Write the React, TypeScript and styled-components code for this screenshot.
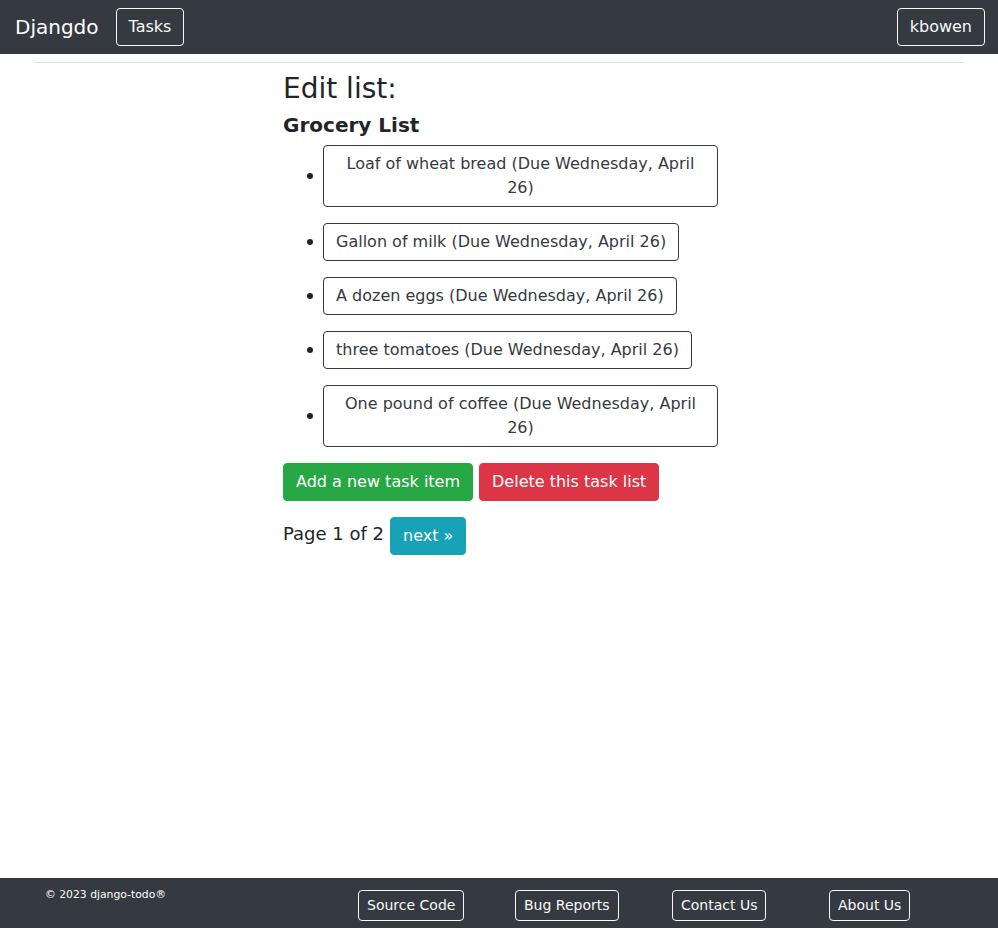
import React from 'react';
import styled, { createGlobalStyle, css } from 'styled-components';

const GlobalStyle = createGlobalStyle`
  * {
    box-sizing: border-box;
  }

  body {
    margin: 0;
    font-family: "DejaVu Sans", "Liberation Sans", sans-serif;
    font-size: 16px;
    line-height: 1.5;
    color: #212529;
    background: #fff;
  }
`;

const COLORS = {
  dark: '#343a40',
  light: '#f8f9fa',
  success: '#28a745',
  danger: '#dc3545',
  info: '#17a2b8',
};

type Variant = 'success' | 'danger' | 'info' | 'outlineDark' | 'outlineLight';

const buttonBase = css`
  display: inline-block;
  font-family: inherit;
  font-weight: 400;
  text-align: center;
  border: 1px solid transparent;
  border-radius: 4px;
  cursor: pointer;
`;

const Button = styled.button<{ $variant: Variant; $small?: boolean }>`
  ${buttonBase}
  padding: ${({ $small }) => ($small ? '4px 8px' : '6px 12px')};
  font-size: ${({ $small }) => ($small ? '14px' : '16px')};
  line-height: 1.5;

  ${({ $variant }) => {
    switch ($variant) {
      case 'outlineDark':
        return css`
          background: transparent;
          color: ${COLORS.dark};
          border-color: ${COLORS.dark};
        `;
      case 'outlineLight':
        return css`
          background: transparent;
          color: ${COLORS.light};
          border-color: ${COLORS.light};
        `;
      default:
        return css`
          background: ${COLORS[$variant]};
          color: #fff;
          border-color: ${COLORS[$variant]};
        `;
    }
  }}
`;

const Page = styled.div`
  display: flex;
  flex-direction: column;
  min-height: 100vh;
`;

const Navbar = styled.nav`
  display: flex;
  align-items: center;
  justify-content: space-between;
  height: 54px;
  padding: 0 13px 0 15px;
  background: ${COLORS.dark};
`;

const NavLeft = styled.div`
  display: flex;
  align-items: center;
`;

const Brand = styled.span`
  font-size: 20px;
  line-height: 30px;
  color: #fff;
  margin-right: 17px;
`;

const Main = styled.main`
  width: 100%;
  max-width: 960px;
  margin: 0 auto;
  padding: 0 15px;
`;

const Rule = styled.hr`
  margin: 8px 0 9px;
  border: 0;
  border-top: 1px solid #dedde9;
`;

const Column = styled.section`
  width: 435px;
  margin-left: 249px;
`;

const Title = styled.h3`
  margin: 0 0 7px;
  font-size: 28px;
  font-weight: 400;
  line-height: 1.2;
`;

const ListName = styled.h5`
  margin: 0 0 8px;
  font-size: 20px;
  font-weight: 700;
  line-height: 1.2;
`;

const Items = styled.ul`
  list-style: none;
  margin: 0 0 16px;
  padding: 0 0 0 40px;
  display: flex;
  flex-direction: column;
  gap: 16px;
`;

const Item = styled.li`
  position: relative;
  display: flex;
  align-items: center;

  &::before {
    content: '';
    position: absolute;
    left: -16px;
    top: 50%;
    width: 6px;
    height: 6px;
    margin-top: -3px;
    border-radius: 50%;
    background: #212529;
  }
`;

const Actions = styled.div`
  display: flex;
  gap: 6px;
  margin-bottom: 16px;
`;

const Pager = styled.div`
  display: flex;
  align-items: center;
  gap: 6px;
`;

const PagerText = styled.span`
  font-size: 18px;
  padding-bottom: 4px;
`;

const Footer = styled.footer`
  margin-top: auto;
  height: 50px;
  background: ${COLORS.dark};
  display: grid;
  grid-template-columns: 313px repeat(4, 157px);
  align-items: start;
  padding: 12px 0 0 45px;
`;

const Copyright = styled.span`
  font-size: 10.8px;
  line-height: 16px;
  color: #fff;
  margin-top: -3px;
`;

const FooterCell = styled.div`
  display: flex;
`;

const tasks = [
  'Loaf of wheat bread',
  'Gallon of milk',
  'A dozen eggs',
  'three tomatoes',
  'One pound of coffee',
];

const footerLinks = ['Source Code', 'Bug Reports', 'Contact Us', 'About Us'];

const App = (): JSX.Element => (
  <Page>
    <GlobalStyle />
    <Navbar>
      <NavLeft>
        <Brand>Djangdo</Brand>
        <Button $variant="outlineLight">Tasks</Button>
      </NavLeft>
      <Button $variant="outlineLight">kbowen</Button>
    </Navbar>

    <Main>
      <Rule />
      <Column>
        <Title>Edit list:</Title>
        <ListName>Grocery List</ListName>
        <Items>
          {tasks.map((task) => (
            <Item key={task}>
              <Button $variant="outlineDark">{task} (Due Wednesday, April 26)</Button>
            </Item>
          ))}
        </Items>
        <Actions>
          <Button $variant="success">Add a new task item</Button>
          <Button $variant="danger">Delete this task list</Button>
        </Actions>
        <Pager>
          <PagerText>Page 1 of 2</PagerText>
          <Button $variant="info">next »</Button>
        </Pager>
      </Column>
    </Main>

    <Footer>
      <Copyright>© 2023 django-todo®</Copyright>
      {footerLinks.map((link) => (
        <FooterCell key={link}>
          <Button $variant="outlineLight" $small>
            {link}
          </Button>
        </FooterCell>
      ))}
    </Footer>
  </Page>
);

export default App;
